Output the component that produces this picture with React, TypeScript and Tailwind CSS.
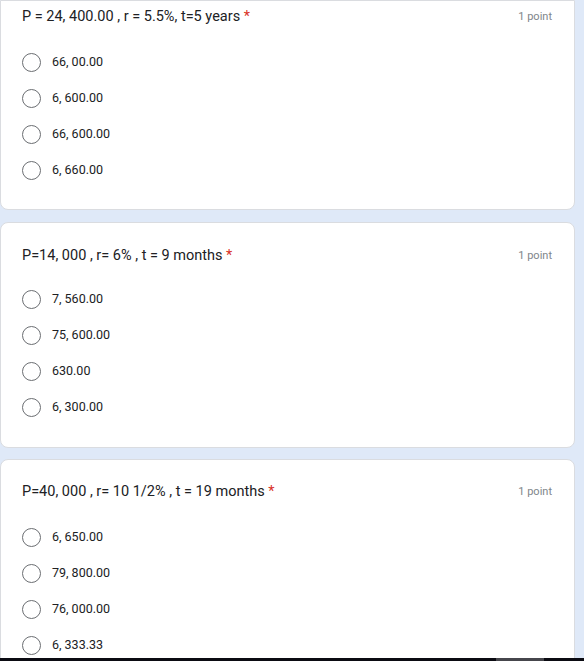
import React from "react";

type Q = { text: string; options: string[] };

const questions: Q[] = [
  { text: "P = 24, 400.00 , r = 5.5%, t=5 years", options: ["66, 00.00", "6, 600.00", "66, 600.00", "6, 660.00"] },
  { text: "P=14, 000 , r= 6% , t = 9 months", options: ["7, 560.00", "75, 600.00", "630.00", "6, 300.00"] },
  { text: "P=40, 000 , r= 10 1/2% , t = 19 months", options: ["6, 650.00", "79, 800.00", "76, 000.00", "6, 333.33"] },
];

const cardClasses = [
  "w-[575px] shrink-0 bg-white border border-[#dadce0] rounded-b-[8px] pl-[21px] pr-[21px] pt-[4px] pb-[21px]",
  "w-[575px] shrink-0 mt-[12px] bg-white border border-[#dadce0] rounded-[8px] pl-[21px] pr-[21px] pt-[21px] pb-[22px]",
  "w-[575px] shrink-0 mt-[11px] bg-white border border-[#dadce0] rounded-[8px] pl-[21px] pr-[21px] pt-[20px] pb-[22px]",
];

const listClasses = ["mt-[15px] flex flex-col", "mt-[13px] flex flex-col", "mt-[15px] flex flex-col"];

function Card({ q, i }: { q: Q; i: number }) {
  return (
    <div className={cardClasses[i]}>
      <div className="flex items-center justify-between h-[24px]">
        <div className="text-[14.5px] text-[#202124]">
          {q.text} <span className="text-[#d93025]">*</span>
        </div>
        <div className="text-[11px] text-[#80868b] pr-[1px]">1 point</div>
      </div>
      <div className={listClasses[i]}>
        {q.options.map((o) => (
          <div key={o} className="flex items-center h-[36px]">
            <div className="w-[19px] h-[19px] rounded-full border-[1.5px] border-[#6b6e72]" />
            <div className="ml-[11px] text-[12.5px] text-[#202124]">{o}</div>
          </div>
        ))}
      </div>
    </div>
  );
}

export default function App() {
  return (
    <div
      className="w-[584px] h-[661px] bg-[#dfe9f8] flex flex-col overflow-hidden"
      style={{ fontFamily: "Roboto, 'Liberation Sans', sans-serif" }}
    >
      <div className="h-[658px] overflow-hidden flex flex-col">
        {questions.map((q, i) => (
          <Card key={i} q={q} i={i} />
        ))}
      </div>
      <div className="h-[3px] bg-[#0b0b12] flex">
        <div className="w-[496px]" />
        <div className="w-[48px] bg-[#46464c]" />
      </div>
    </div>
  );
}
